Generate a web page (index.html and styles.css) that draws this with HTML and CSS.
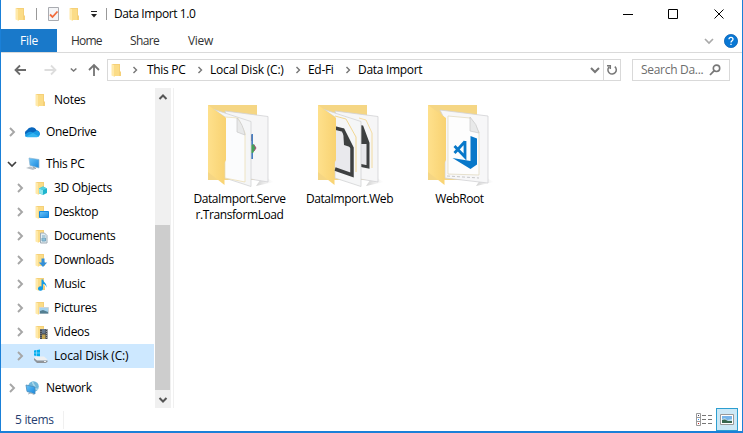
FILE: index.html
```html
<!DOCTYPE html>
<html lang="en">
<head>
<meta charset="utf-8">
<title>Data Import 1.0</title>
<link rel="stylesheet" href="styles.css">
</head>
<body>
<svg class="defs" width="0" height="0">
  <defs>
    <linearGradient id="gold" x1="0" x2="1"><stop offset="0" stop-color="#fee08c"/><stop offset="1" stop-color="#f8d271"/></linearGradient>
    <linearGradient id="screen" x1="0" y1="0" x2="1" y2="1"><stop offset="0" stop-color="#6bc6fa"/><stop offset="1" stop-color="#1686dc"/></linearGradient>
    <linearGradient id="shade"><stop offset="0" stop-color="#bbb" stop-opacity=".7"/><stop offset="1" stop-color="#ddd" stop-opacity="0"/></linearGradient>
    <symbol id="folder" viewBox="0 0 16 16"><path d="M3 2h8v7l1 1v4H4z" fill="#f5d078"/><path d="M2.500 2l3.500 1.500V15l-3.500-1.500z" fill="#ffe9a9"/><path d="M5 3h5v11H5z" fill="#fbdc87"/></symbol>
    <symbol id="right" viewBox="0 0 8 10"><path d="M2 1l4 4-4 4" fill="none" stroke="currentColor" stroke-width="1.900"/></symbol>
    <symbol id="down" viewBox="0 0 10 8"><path d="M1 2l4 4 4-4" fill="none" stroke="currentColor" stroke-width="1.700"/></symbol>
    <symbol id="back-folder" viewBox="0 0 70 84"><path d="M3 2h49v75H3z" fill="#f5d684"/></symbol>
    <symbol id="front-folder" viewBox="0 0 70 84"><path d="M3 2l18 13v42l-1.500 3v22L3 69z" fill="url(#gold)"/></symbol>
  </defs>
</svg>
<div class="window">
  <header class="titlebar">
    <svg class="i16 app"><use href="#folder"/></svg><span class="bar"></span>
    <svg class="i16 check" viewBox="0 0 16 16"><path d="M3.500 1.500h10v13h-10z" fill="#f4f5f7" stroke="#a9abb0"/><path d="M5 8.500l2.500 2.500 5-5.500" fill="none" stroke="#f16b3a" stroke-width="1.800"/></svg>
    <svg class="i16 quick"><use href="#folder"/></svg>
    <svg class="custom" width="8" height="8" viewBox="0 0 8 8"><path d="M1 .5h6" stroke="#222"/><path d="M1 3h6L4 6.500z" fill="#222"/></svg>
    <span class="bar"></span><span class="title">Data Import 1.0</span>
    <svg class="controls" width="110" height="20" viewBox="0 0 110 20" fill="none" stroke="#000"><path d="M2 10.500h10M47.500 5.500h9v9h-9zM93.500 5.500l9 9m0-9l-9 9"/></svg>
  </header>
  <nav class="tabs">
    <span class="file">File</span><span class="home">Home</span><span class="share">Share</span><span>View</span>
    <svg class="expand" width="10" height="8"><use href="#down"/></svg>
    <svg class="help" width="14" height="14" viewBox="0 0 14 14"><circle cx="7" cy="7" r="6.600" fill="#0877d4" stroke="#1165b4" stroke-width=".8"/><path d="M5 5.200C5 2.700 9 2.700 9 5.200 9 6.700 7 6.700 7 8.500M7 9.700v1.300" fill="none" stroke="#fff" stroke-width="1.300"/></svg>
  </nav>
  <div class="navigation">
    <svg class="arrows" width="94" height="16" viewBox="0 0 94 16" fill="none" stroke-width="1.800"><path d="M25 8H14.500m4.500-4.500L14.500 8l4.500 4.500" stroke="#6b6b6b"/><path d="M43.500 8h11m-4.500-4.500L54.500 8l-4.500 4.500" stroke="#ddd"/><path d="M69.800 6.500l2.800 2.500 2.800-2.500" stroke="#777" stroke-width="1.500"/><path d="M93 14V3m-5 5l5-5 5 5" stroke="#747474"/></svg>
    <div class="address">
      <svg class="i16"><use href="#folder"/></svg>
      <svg class="sep first"><use href="#right"/></svg><span class="crumb pc">This PC</span>
      <svg class="sep"><use href="#right"/></svg><span class="crumb disk">Local Disk (C:)</span>
      <svg class="sep"><use href="#right"/></svg><span class="crumb edfi">Ed-Fi</span>
      <svg class="sep"><use href="#right"/></svg><span class="crumb">Data Import</span>
      <svg class="history" width="10" height="8" viewBox="0 0 10 8"><path d="M1 2l4 4 4-4" fill="none" stroke="#777" stroke-width="2"/></svg>
      <span class="refresh"><svg width="12" height="12" viewBox="0 0 12 12"><path d="M8.800 2.600A4.200 4.200 0 1 1 3 3M1 1.700h3.300V5" fill="none" stroke="#777" stroke-width="1.500"/></svg></span>
    </div>
    <div class="search"><span>Search Da...</span><svg width="12" height="12" viewBox="0 0 12 12"><circle cx="7.500" cy="4.300" r="3.200" fill="none" stroke="#777" stroke-width="1.600"/><path d="M5 6.800L1 11" stroke="#777" stroke-width="1.800"/></svg></div>
  </div>
  <main>
    <aside>
      <div class="row sub"><span class="chev"></span><svg class="i16"><use href="#folder"/></svg><span>Notes</span></div>
      <div class="row top gap"><svg class="chev"><use href="#right"/></svg><svg class="i16" viewBox="0 0 16 16"><path d="M3 12a3.200 3.200 0 0 1 0-6 5.300 5.300 0 0 1 9.500.2A3.600 3.600 0 0 1 15.500 11l-5 1.500z" fill="#0866bd"/><path d="M1 11.500C3 8 6 7 9 8.500l4-2A3.500 3.500 0 0 1 14 13H3Q1 13 1 11.500" fill="#199be5"/><path d="M2 12.500L9 9l6 3.500-2 .8H3z" fill="#35b5f1"/></svg><span>OneDrive</span></div>
      <div class="row top gap"><svg class="chev open" viewBox="0 0 10 8"><use href="#down"/></svg><svg class="i16" viewBox="0 0 16 16"><path d="M5 2l10 1.500V12L6 9.500z" fill="url(#screen)" stroke="#8cb6d3" stroke-width=".7"/><path d="M2 12l4-1.500 6 2-3 1.500z" fill="#b9c1c8"/><path d="M9 11l3 1.500" stroke="#8a98a2"/></svg><span>This PC</span></div>
      <div class="row sub"><svg class="chev"><use href="#right"/></svg><svg class="i16" viewBox="0 0 16 16"><use href="#folder"/><path d="M6 8.500l4-2 4 2v4.500l-4 2-4-2z" fill="#20b4cd"/><path d="M6 8.500l4 1.500v5l-4-2z" fill="#8de5ed"/><path d="M6 8.500l4-2 4 2-4 1.500z" fill="#54d0df"/></svg><span>3D Objects</span></div>
      <div class="row sub"><svg class="chev"><use href="#right"/></svg><svg class="i16" viewBox="0 0 16 16"><use href="#folder"/><path d="M6.500 7.500h9v6h-9z" fill="url(#screen)" stroke="#158ae0"/></svg><span>Desktop</span></div>
      <div class="row sub"><svg class="chev"><use href="#right"/></svg><svg class="i16" viewBox="0 0 16 16"><use href="#folder"/><path d="M7.500 5h4l2.500 2.500V15H7.500z" fill="#e3edf3" stroke="#a0acb5"/><path d="M9 8h3.500M9 10h3.500v3H9z" fill="#8ac0de" stroke="#77a7be"/></svg><span>Documents</span></div>
      <div class="row sub"><svg class="chev"><use href="#right"/></svg><svg class="i16" viewBox="0 0 16 16"><use href="#folder"/><path d="M8.500 6.500h3v4h2.700L10 15l-4.200-4.500h2.700z" fill="#338fd9"/></svg><span>Downloads</span></div>
      <div class="row sub"><svg class="chev"><use href="#right"/></svg><svg class="i16" viewBox="0 0 16 16"><use href="#folder"/><path d="M8.500 3.500H10c.5 3 4 3.500 3.500 8-.8-3-2-3.500-3.500-3.500v5a2.500 2.200 0 1 1-1.500-2.500z" fill="#159be5"/></svg><span>Music</span></div>
      <div class="row sub"><svg class="chev"><use href="#right"/></svg><svg class="i16" viewBox="0 0 16 16"><use href="#folder"/><path d="M6.500 7.500h9v6h-9z" fill="#a6d3ed" stroke="#cdd5d9"/><path d="M7 11l3-1 5 2v1.500H7z" fill="#537e91"/></svg><span>Pictures</span></div>
      <div class="row sub"><svg class="chev"><use href="#right"/></svg><svg class="i16" viewBox="0 0 16 16"><use href="#folder"/><path d="M7 5h7.500v10H7z" fill="#42454b"/><path d="M9 5h3.500v4.500H9z" fill="#67798d"/><path d="M9 10.500h3.500V15H9z" fill="#c3a553"/><path d="M8 5v10m5.500-10v10" stroke="#999" stroke-dasharray="1 1"/></svg><span>Videos</span></div>
      <div class="row sub selected"><svg class="chev"><use href="#right"/></svg><svg class="i16 drive" viewBox="0 0 16 16"><path d="M1 2.500l2.500-.4v2.700H1zm3-.5L7 1.500v3.300H4zM1 5.300h2.500V8L1 7.600zm3 0h3v3.300l-3-.4z" fill="#00aeef"/><path d="M1 10l3-1.500h7l3.500 3-2.500 1H4z" fill="#eff0f1"/><path d="M1 10l3 2.500h10.500V14l-2 1H4l-3-3z" fill="#8f9499"/><path d="M11 13.500h2" stroke="#eee"/></svg><span>Local Disk (C:)</span></div>
      <div class="row top gap"><svg class="chev"><use href="#right"/></svg><svg class="i16 net" viewBox="0 0 16 16"><circle cx="9.500" cy="6.500" r="5.300" fill="#70b7da"/><path d="M9 1.500c-2 3 4 4 1 7l4 1" fill="none" stroke="#add9ea" stroke-width="1.500"/><path d="M2 5l9 2v7l-8-2.500z" fill="url(#screen)" stroke="#4c8bb9" stroke-width=".8"/><path d="M4 14l3-1 3 1.500" fill="none" stroke="#aab8c1"/></svg><span>Network</span></div>
    </aside>
    <div class="scroll">
      <svg width="10" height="8" viewBox="0 0 10 8"><path d="M1.500 6L5 2.500 8.500 6" fill="none" stroke="#555" stroke-width="2"/></svg>
      <span class="thumb"></span>
      <svg width="10" height="8" viewBox="0 0 10 8"><path d="M1.500 2L5 5.500 8.500 2" fill="none" stroke="#555" stroke-width="2"/></svg>
    </div>
    <section class="files">
      <figure>
        <svg class="large" viewBox="0 0 70 84"><path d="M58 73l11 6-18 4z" fill="url(#shade)"/><use href="#back-folder"/><path d="M20 8l43 5.500V79l-24-4z" fill="#f6f6f7" stroke="#d2d2d4" stroke-width=".8"/><path d="M44 31h4v25h-4z" fill="#477fc2"/><path d="M45 32h2v6h-2z" fill="#254e93"/><path d="M44 43l5-2 2 4-3 5h-4z" fill="#45a05a"/><path d="M49 42l2 3-2 3" stroke="#b24a7d" fill="none"/><path d="M9 6.500l37 12v65L20 75V14z" fill="#f5f6f7" stroke="#d2d3d4" stroke-width=".8"/><path d="M20 14l13 1 7 15v49l-20-4z" fill="#fbfcfd" stroke="#ebdbad" stroke-width=".7"/><path d="M32 15q6 6 8 17l-8-3z" fill="#e8e9e9" stroke="#c9c9c9" stroke-width=".7"/><use href="#front-folder"/></svg>
        <figcaption>DataImport.Serve<br>r.TransformLoad</figcaption>
      </figure>
      <figure>
        <svg class="large" viewBox="0 0 70 84"><path d="M58 73l11 6-18 4z" fill="url(#shade)"/><use href="#back-folder"/><path d="M20 8l43 5.500V79l-24-4z" fill="#f6f6f7" stroke="#d2d2d4" stroke-width=".8"/><path d="M39 23l8 1 6 16v24l-14-3" fill="#e8e8eb" stroke="#3e4041" stroke-width="3"/><path d="M46 24l8 17h-8z" fill="#3e4041"/><path d="M44 15l7 2 6 13v35" fill="none" stroke="#f3d58b" stroke-width=".8"/><path d="M9 6.500l37 12v65L20 75V14z" fill="#f5f6f7" stroke="#d2d3d4" stroke-width=".8"/><path d="M20 13l11 3 10 18v35" fill="none" stroke="#f0ce77" stroke-width=".8"/><path d="M20 25l8 2 9 18v27l-17-6" fill="#e9e9ed" stroke="#3e4041" stroke-width="3.500"/><path d="M28 25l10 20-9-3z" fill="#3e4041"/><use href="#front-folder"/></svg>
        <figcaption>DataImport.Web</figcaption>
      </figure>
      <figure>
        <svg class="large" viewBox="0 0 70 84"><path d="M58 73l11 6-18 4z" fill="url(#shade)"/><use href="#back-folder"/><path d="M15 7l48 6v67l-43-5V17z" fill="#f7f7f8" stroke="#d2d2d4" stroke-width=".8"/><path d="M23 13l22 2 9 14v43l-31-1z" fill="#fdfdfd" stroke="#ded5b9" stroke-width=".7"/><path d="M22 73l32 2" stroke="#bbb" stroke-width=".8" stroke-dasharray="3 2"/><path d="M45 14q7 7 9 16l-9-2z" fill="#e8e9e9" stroke="#c9c9c9" stroke-width=".7"/><path d="M45.500 33l6.500 2.500v26L45.500 66l-18-11 18 3z" fill="#0878c9"/><path d="M40 38v16L29.500 43M29.500 50L40 38.500" fill="none" stroke="#0878c9" stroke-width="2.800"/><use href="#front-folder"/></svg>
        <figcaption>WebRoot</figcaption>
      </figure>
    </section>
  </main>
  <footer>
    <span class="count">5 items</span><span class="split"></span>
    <svg class="details" width="16" height="13" viewBox="0 0 16 13"><path d="M.5.500h4v12h-4zm0 4h4m-4 4h4" fill="#fff" stroke="#999"/><path d="M6 2.500h4m2 0h4m-10 4h4m2 0h4m-10 4h4m2 0h4" stroke="#777"/><path d="M2 2.500h1" stroke="#446"/><path d="M2 6.500h1" stroke="#39f"/><path d="M2 10.500h1" stroke="#c22"/></svg>
    <span class="thumbnails"><svg width="14" height="11" viewBox="0 0 14 11"><path d="M.5.500h13v10H.5z" fill="#fff" stroke="#999"/><path d="M2 2h10v7H2z" fill="#76b4e9"/><path d="M2 5l3-1 2 2 5-1v2H2z" fill="#b9dcec"/><path d="M2 6l3-.5 3 1.500h4v2H2z" fill="#38664e"/></svg></span>
  </footer>
</div>
</body>
</html>
```
FILE: styles.css
```css
* { box-sizing: border-box; }
body { margin: 0; overflow: hidden; background: #fff; color: #000; font: 12px/16px "Open Sans", "Noto Sans", sans-serif; letter-spacing: -.3px; }
.defs { position: absolute; }
svg { display: block; flex: none; }
span { white-space: nowrap; }
.window { width: 743px; height: 433px; display: flex; flex-direction: column; border: solid #1a80d8; border-width: 0 1px 2px; }
.i16 { width: 16px; height: 16px; }

.titlebar { height: 29px; flex: none; display: flex; align-items: center; padding: 0 11px 2px 12px; }
.titlebar .bar { width: 1px; height: 12px; background: #999; }
.app { margin-right: 7px; }
.check { margin-left: 8px; margin-right: 6px; }
.quick { margin-right: 7px; }
.custom { margin: 2px 8px 0 0; }
.title { margin-left: 7px; letter-spacing: -.42px; }
.controls { margin-left: auto; }

.tabs { height: 24px; flex: none; display: flex; align-items: center; border-bottom: 1px solid #dadada; padding-right: 4px; color: #333; }
.file { width: 56px; height: 23px; line-height: 24px; text-align: center; background: #1979ca; color: #fff; margin-right: 14px; }
.home { width: 59px; letter-spacing: -.8px; }
.share { width: 58px; letter-spacing: -.6px; }
.expand { margin-left: auto; margin-right: 10px; color: #aaa; }

.navigation { height: 35px; flex: none; display: flex; padding: 6px 12px 0 0; }
.arrows { margin-top: 3px; overflow: visible; }
.address { width: 514px; height: 22px; margin-left: 12px; display: flex; align-items: center; border: 1px solid #d9d9d9; }
.address .i16 { margin-left: 1px; }
.sep { width: 6px; height: 8px; color: #777; }
.sep.first { margin-left: 7px; }
.crumb { margin-left: 7px; }
.first + .crumb { margin-left: 9px; }
.pc { width: 50px; }
.disk { width: 85px; letter-spacing: -.2px; }
.edfi { width: 37px; }
.history { margin-left: auto; margin-right: 3px; }
.refresh { width: 17px; height: 20px; border-left: 1px solid #d9d9d9; display: flex; align-items: center; justify-content: center; }
.search { width: 98px; height: 22px; margin-left: auto; border: 1px solid #d9d9d9; padding: 0 8px; display: flex; align-items: center; justify-content: space-between; color: #6d6d6d; }

main { height: 320px; flex: none; display: flex; }
aside { width: 154px; }
.row { height: 24px; display: flex; align-items: center; }
.gap { margin-top: 8px; }
.top { padding-left: 7px; }
.sub { padding-left: 15px; }
.chev { width: 8px; height: 10px; color: #a6a6a6; }
.chev.open { width: 10px; height: 8px; margin-left: -1px; margin-right: -1px; color: #404040; }
.row .i16 { margin-left: 8px; margin-right: 6px; }
.sub .i16 { margin-left: 9px; margin-right: 6px; }
.row.sub span:last-child { margin-left: -1px; }
.selected { width: 153px; background: #cde8ff; letter-spacing: -.15px; }
.scroll { width: 16px; background: #f0f0f0; display: flex; flex-direction: column; align-items: center; padding: 5px 0 4px; }
.thumb { width: 15px; height: 165px; background: #cdcdcd; margin: auto 1px 6px 0; }
.files { margin-left: 2px; border-left: 1px solid #f0f0f0; padding: 15px 0 0 9px; display: flex; }
figure { margin: 0; width: 110px; }
.large { width: 70px; height: 84px; margin: 0 auto 4px 22px; }
figure:nth-child(2) .large { margin-left: 22px; }
figure:nth-child(3) .large { margin-left: 22px; }
figcaption { width: 112px; padding-left: 1px; text-align: center; white-space: nowrap; letter-spacing: -.4px; }

footer { height: 23px; flex: none; display: flex; align-items: center; padding-left: 14px; color: #263e70; }
.split { width: 1px; height: 18px; background: #f0f0f0; margin-left: 9px; }
.details { margin-left: auto; margin-right: 4px; }
.thumbnails { width: 22px; height: 23px; margin-right: 4px; border: 1px solid #2c9ed0; background: #cce8f6; display: flex; align-items: center; justify-content: center; }
```
